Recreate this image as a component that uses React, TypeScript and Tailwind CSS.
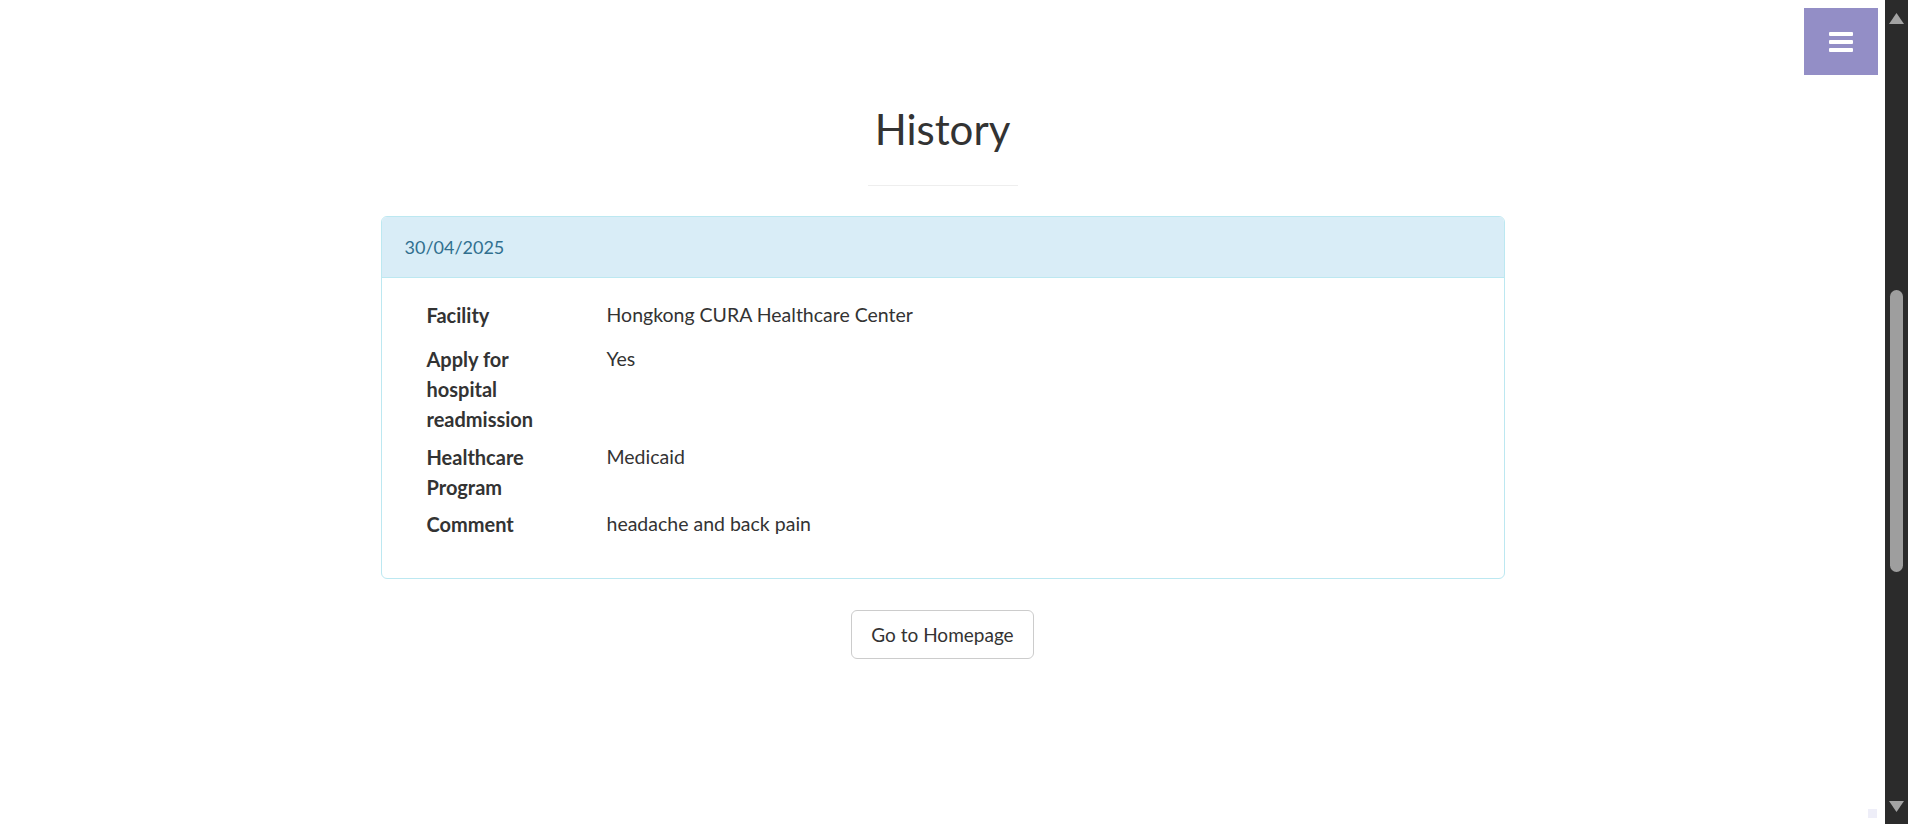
import React from "react";

const rows: { label: string[]; value: string; mt: string }[] = [
  { label: ["Facility"], value: "Hongkong CURA Healthcare Center", mt: "mt-0" },
  { label: ["Apply for", "hospital", "readmission"], value: "Yes", mt: "mt-[14px]" },
  { label: ["Healthcare", "Program"], value: "Medicaid", mt: "mt-[8px]" },
  { label: ["Comment"], value: "headache and back pain", mt: "mt-[7px]" },
];

export default function App() {
  return (
    <div
      className="flex h-[824px] w-full overflow-hidden bg-white text-[#333333]"
      style={{ fontFamily: "Lato, 'Open Sans', sans-serif" }}
    >
      <div className="relative flex-1">
        <button className="absolute right-[7px] top-[8px] flex h-[67px] w-[74px] flex-col items-center justify-center gap-[4px] bg-[#938ec6]">
          <span className="block h-[4px] w-[24px] rounded-[1px] bg-white" />
          <span className="block h-[4px] w-[24px] rounded-[1px] bg-white" />
          <span className="block h-[4px] w-[24px] rounded-[1px] bg-white" />
        </button>

        <div className="flex flex-col items-center">
          <h2 className="mt-[106px] text-[42px] font-normal leading-[46px]">History</h2>
          <div className="mt-[33px] h-px w-[150px] bg-[#eeeeee]" />

          <div className="mt-[30px] w-[1124px] overflow-hidden rounded-[6px] border border-[#bce8f1]">
            <div className="border-b border-[#bce8f1] bg-[#d9edf7] px-[23px] py-[15px] text-[18px] leading-[30px] text-[#31708f]">
              30/04/2025
            </div>
            <div className="px-[45px] pb-[39px] pt-[22px] text-[20px] leading-[30px]">
              {rows.map((r) => (
                <div key={r.value} className={`flex ${r.mt}`}>
                  <div className="w-[180px] shrink-0 font-bold">
                    {r.label.map((l) => (
                      <div key={l}>{l}</div>
                    ))}
                  </div>
                  <div className="text-[19.5px]">{r.value}</div>
                </div>
              ))}
            </div>
          </div>

          <button className="mt-[31px] flex h-[49px] items-center rounded-[6px] border border-[#cccccc] bg-white px-[19px] text-[19px] leading-[30px] text-[#333333]">
            Go to Homepage
          </button>
        </div>

        <div className="absolute bottom-[6px] right-[8px] h-[9px] w-[9px] bg-[#eeeef8]" />
      </div>

      <div className="flex w-[23px] shrink-0 flex-col items-center bg-[#2b2b2b] pb-[12px] pt-[13px]">
        <svg width="15" height="11" viewBox="0 0 15 11">
          <polygon points="7.5,0 15,11 0,11" fill="#a3a3a3" />
        </svg>
        <div className="mt-[266px] h-[282px] w-[13px] rounded-full bg-[#9e9e9e]" />
        <div className="flex-1" />
        <svg width="15" height="11" viewBox="0 0 15 11">
          <polygon points="0,0 15,0 7.5,11" fill="#a3a3a3" />
        </svg>
      </div>
    </div>
  );
}
